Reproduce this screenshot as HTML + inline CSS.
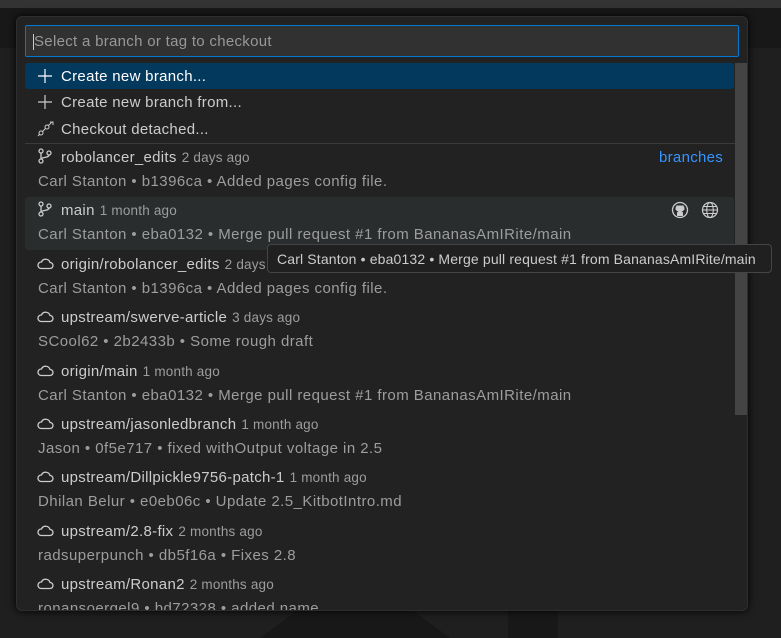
<!DOCTYPE html>
<html><head><meta charset="utf-8"><style>
*{margin:0;padding:0;box-sizing:border-box}
body{width:781px;height:638px;overflow:hidden;background:#1f1f1f;font-family:"Liberation Sans",sans-serif;position:relative}
.top{position:absolute;left:0;top:0;width:781px;height:8px;background:#333}
.lside{position:absolute;left:0;top:8px;width:781px;height:40px;background:#181818}
.sh1{position:absolute;left:260px;top:610px;width:190px;height:28px;background:#181818;clip-path:polygon(20% 0,80% 0,100% 100%,0 100%)}
.sh2{position:absolute;left:508px;top:610px;width:50px;height:28px;background:#181818}
.panel{position:absolute;left:16px;top:16px;width:732px;height:595px;background:#222;border:1px solid #2e2e2e;border-radius:6px;box-shadow:0 0 8px #000;overflow:hidden}
.inp{position:absolute;left:8px;top:8px;width:714px;height:32px;background:#313131;border:1px solid #0078d4;border-radius:2px;color:#989898;font-size:15px;letter-spacing:0.3px;line-height:31px;padding-left:8px}
.inp:before{content:"";position:absolute;left:7px;top:8px;width:1px;height:16px;background:#ccc}
.row{position:absolute;left:8px;width:709px;color:#ccc;font-size:15px;letter-spacing:0.3px}
.l{position:absolute;left:36px;white-space:nowrap}
.ic{position:absolute;left:12px}
.t{color:#9d9d9d;font-size:13.5px;letter-spacing:0.2px;margin-left:5px}
.d{position:absolute;left:13px;color:#9d9d9d;white-space:nowrap;letter-spacing:0.45px}
.sb{position:absolute;left:718px;top:46px;width:12px;height:352px;background:#444}
.tip{position:absolute;left:267px;top:244px;width:505px;height:29px;background:#202020;border:1px solid #454545;border-radius:4px;color:#ccc;font-size:14px;letter-spacing:0.15px;line-height:28px;padding-left:9px;white-space:nowrap}
</style></head><body>
<div class="top"></div><div class="lside"></div><div class="sh1"></div><div class="sh2"></div>
<div class="panel">
<div class="inp">Select a branch or tag to checkout</div>
<div class="row" style="top:46px;height:26px;background:#04395e;border-radius:3px;color:#fff"><svg class="ic" style="top:5px" width="16" height="16"><path d="M8 1v14M1 8h14" stroke="#fff" stroke-width="1.2"/></svg><span class="l" style="top:5px">Create new branch...</span></div>
<div class="row" style="top:72px;height:26px"><svg class="ic" style="top:5px" width="16" height="16"><path d="M8 1v14M1 8h14" stroke="#ccc" stroke-width="1.2"/></svg><span class="l" style="top:5px">Create new branch from...</span></div>
<div class="row" style="top:99px;height:26px"><svg class="ic" style="top:4px" width="18" height="18"><circle cx="4" cy="13" r="2" fill="none" stroke="#ccc"/><circle cx="10" cy="7" r="2" fill="none" stroke="#ccc"/><path d="M1 16l2-2M5.5 11.5l3-3M11.5 5.5l3-3M13 2h3v3" stroke="#ccc" fill="none"/></svg><span class="l" style="top:5px">Checkout detached...</span></div>
<div style="position:absolute;left:8px;top:126px;width:712px;height:1px;background:#3a3a3a"></div>
<div class="row" style="top:180px;height:53px;background:#2a2d2e;border-radius:3px"></div>
<div id="list"></div>
<div class="sb"></div>
<div style="position:absolute;left:642px;top:132px;color:#3794ff;font-size:15px;letter-spacing:0.3px">branches</div>
<svg style="position:absolute;left:654px;top:184px" width="18" height="18"><circle cx="9" cy="9" r="7.5" fill="none" stroke="#ccc" stroke-width="1.3"/><path d="M6 15v-3c0-1 1-1.5 1.5-1.8C5 10 4.5 8.5 4.5 7.5c0-1 .5-1.7 1-2.2L5.5 4l1.7.7a5 5 0 013.6 0L12.5 4l0 1.3c.5.5 1 1.2 1 2.2 0 1-.5 2.5-3 2.7.5.3 1.5.8 1.5 1.8v3" fill="#ccc"/></svg>
<svg style="position:absolute;left:684px;top:184px" width="18" height="18"><circle cx="9" cy="9" r="7.5" fill="none" stroke="#ccc" stroke-width="1.2"/><ellipse cx="9" cy="9" rx="3.3" ry="7.5" fill="none" stroke="#ccc" stroke-width="1.1"/><path d="M1.5 9h15M2.5 5.5h13M2.5 12.5h13" stroke="#ccc" stroke-width="1.1"/></svg>
</div>
<div class="tip">Carl Stanton • eba0132 • Merge pull request #1 from BananasAmIRite/main</div>
<script>
var br='<svg class="ic" style="top:4px" width="16" height="16"><circle cx="4" cy="3" r="2" fill="none" stroke="#ccc" stroke-width="1.3"/><circle cx="4" cy="13" r="2" fill="none" stroke="#ccc" stroke-width="1.3"/><circle cx="12" cy="5" r="2" fill="none" stroke="#ccc" stroke-width="1.3"/><path d="M4 5v6M12 7c0 3-8 2-8 4" fill="none" stroke="#ccc" stroke-width="1.3"/></svg>';
var cl='<svg class="ic" style="top:5px" width="17" height="14"><path d="M4 12.5h9a3 3 0 000-6 4.5 4.5 0 00-8.5-.5A3.2 3.2 0 004 12.5z" fill="none" stroke="#ccc" stroke-width="1.3"/></svg>';
var R=[[br,"robolancer_edits","2 days ago","Carl Stanton • b1396ca • Added pages config file."],
[br,"main","1 month ago","Carl Stanton • eba0132 • Merge pull request #1 from BananasAmIRite/main"],
[cl,"origin/robolancer_edits","2 days ago","Carl Stanton • b1396ca • Added pages config file."],
[cl,"upstream/swerve-article","3 days ago","SCool62 • 2b2433b • Some rough draft"],
[cl,"origin/main","1 month ago","Carl Stanton • eba0132 • Merge pull request #1 from BananasAmIRite/main"],
[cl,"upstream/jasonledbranch","1 month ago","Jason • 0f5e717 • fixed withOutput voltage in 2.5"],
[cl,"upstream/Dillpickle9756-patch-1","1 month ago","Dhilan Belur • e0eb06c • Update 2.5_KitbotIntro.md"],
[cl,"upstream/2.8-fix","2 months ago","radsuperpunch • db5f16a • Fixes 2.8"],
[cl,"upstream/Ronan2","2 months ago","ronansoergel9 • bd72328 • added name"]];
var h="";R.forEach(function(r,i){var y=127+i*53.4;h+='<div class="row" style="top:'+y+'px;height:53px">'+r[0]+'<span class="l" style="top:5px">'+r[1]+'<span class="t">'+r[2]+'</span></span><span class="d" style="top:29px">'+r[3]+'</span></div>';});
document.getElementById("list").outerHTML=h;
</script>
</body></html>
